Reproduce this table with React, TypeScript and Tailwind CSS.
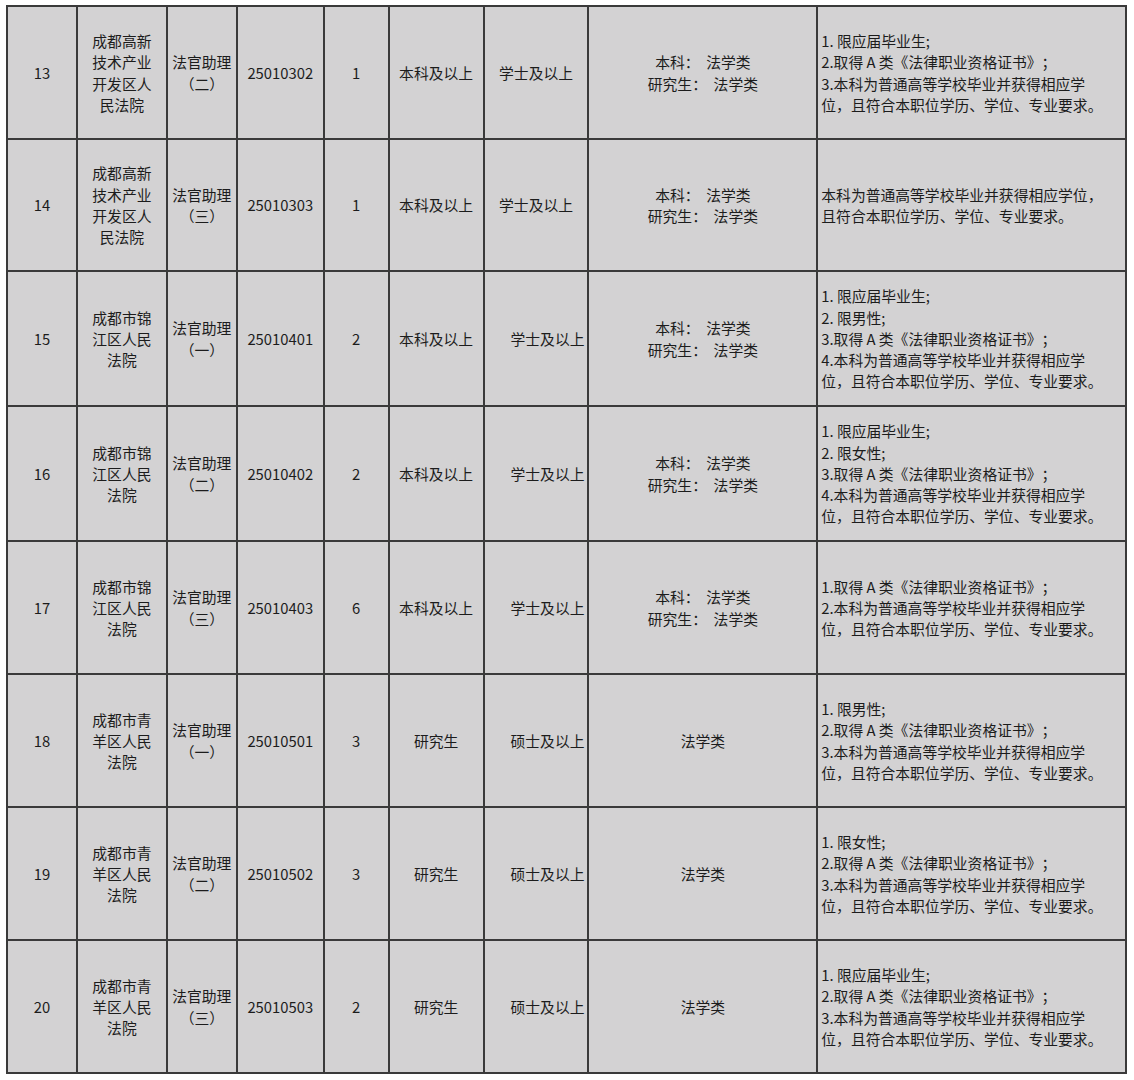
import React from "react";

type Row = {
  no: string;
  court: string[];
  post: string[];
  code: string;
  num: string;
  edu: string;
  degree: string;
  degreeRight: boolean;
  major: string[];
  notes: string[];
  h: number;
};

const N_BK = "本科为普通高等学校毕业并获得相应学";
const TAIL = "位，且符合本职位学历、学位、专业要求。";

const rows: Row[] = [
  {
    no: "13",
    court: ["成都高新", "技术产业", "开发区人", "民法院"],
    post: ["法官助理", "（二）"],
    code: "25010302",
    num: "1",
    edu: "本科及以上",
    degree: "学士及以上",
    degreeRight: false,
    major: ["本科：  法学类", "研究生：  法学类"],
    notes: ["1. 限应届毕业生;", "2.取得 A 类《法律职业资格证书》；", "3." + N_BK, TAIL],
    h: 133,
  },
  {
    no: "14",
    court: ["成都高新", "技术产业", "开发区人", "民法院"],
    post: ["法官助理", "（三）"],
    code: "25010303",
    num: "1",
    edu: "本科及以上",
    degree: "学士及以上",
    degreeRight: false,
    major: ["本科：  法学类", "研究生：  法学类"],
    notes: ["本科为普通高等学校毕业并获得相应学位，", "且符合本职位学历、学位、专业要求。"],
    h: 132,
  },
  {
    no: "15",
    court: ["成都市锦", "江区人民", "法院"],
    post: ["法官助理", "（一）"],
    code: "25010401",
    num: "2",
    edu: "本科及以上",
    degree: "学士及以上",
    degreeRight: true,
    major: ["本科：  法学类", "研究生：  法学类"],
    notes: ["1. 限应届毕业生;", "2. 限男性;", "3.取得 A 类《法律职业资格证书》；", "4." + N_BK, TAIL],
    h: 135,
  },
  {
    no: "16",
    court: ["成都市锦", "江区人民", "法院"],
    post: ["法官助理", "（二）"],
    code: "25010402",
    num: "2",
    edu: "本科及以上",
    degree: "学士及以上",
    degreeRight: true,
    major: ["本科：  法学类", "研究生：  法学类"],
    notes: ["1. 限应届毕业生;", "2. 限女性;", "3.取得 A 类《法律职业资格证书》；", "4." + N_BK, TAIL],
    h: 135,
  },
  {
    no: "17",
    court: ["成都市锦", "江区人民", "法院"],
    post: ["法官助理", "（三）"],
    code: "25010403",
    num: "6",
    edu: "本科及以上",
    degree: "学士及以上",
    degreeRight: true,
    major: ["本科：  法学类", "研究生：  法学类"],
    notes: ["1.取得 A 类《法律职业资格证书》；", "2." + N_BK, TAIL],
    h: 133,
  },
  {
    no: "18",
    court: ["成都市青", "羊区人民", "法院"],
    post: ["法官助理", "（一）"],
    code: "25010501",
    num: "3",
    edu: "研究生",
    degree: "硕士及以上",
    degreeRight: true,
    major: ["法学类"],
    notes: ["1. 限男性;", "2.取得 A 类《法律职业资格证书》；", "3." + N_BK, TAIL],
    h: 133,
  },
  {
    no: "19",
    court: ["成都市青", "羊区人民", "法院"],
    post: ["法官助理", "（二）"],
    code: "25010502",
    num: "3",
    edu: "研究生",
    degree: "硕士及以上",
    degreeRight: true,
    major: ["法学类"],
    notes: ["1. 限女性;", "2.取得 A 类《法律职业资格证书》；", "3." + N_BK, TAIL],
    h: 133,
  },
  {
    no: "20",
    court: ["成都市青", "羊区人民", "法院"],
    post: ["法官助理", "（三）"],
    code: "25010503",
    num: "2",
    edu: "研究生",
    degree: "硕士及以上",
    degreeRight: true,
    major: ["法学类"],
    notes: ["1. 限应届毕业生;", "2.取得 A 类《法律职业资格证书》；", "3." + N_BK, TAIL],
    h: 133,
  },
];

const cell = "flex flex-col justify-center border-r-2 border-[#3a3a3a] h-full";

function Lines({ lines }: { lines: string[] }) {
  return (
    <>
      {lines.map((l, i) => (
        <div key={i} className="whitespace-pre">
          {l}
        </div>
      ))}
    </>
  );
}

export default function App() {
  return (
    <div className="bg-white w-[1134px] h-[1080px] pt-[5px] pl-[6px]">
      <div
        className="w-[1121px] border-t-2 border-l-2 border-[#3a3a3a] bg-[#d3d2d3] text-[#1c1c1c] text-[14.8px] leading-[21.3px] [text-spacing-trim:space-all]"
        style={{ fontFamily: '"Noto Sans CJK SC", "Noto Sans", sans-serif' }}
      >
        {rows.map((r) => (
          <div
            key={r.no}
            className="flex border-b-2 border-[#3a3a3a]"
            style={{ height: r.h }}
          >
            <div className={`${cell} w-[70px] items-center text-center`}>{r.no}</div>
            <div className={`${cell} w-[90px] items-center text-center`}>
              <Lines lines={r.court} />
            </div>
            <div className={`${cell} w-[70px] items-center text-center`}>
              <Lines lines={r.post} />
            </div>
            <div className={`${cell} w-[87px] items-center text-center`}>{r.code}</div>
            <div className={`${cell} w-[65px] items-center text-center`}>{r.num}</div>
            <div className={`${cell} w-[95px] items-center text-center`}>{r.edu}</div>
            <div
              className={`${cell} w-[105px] ${
                r.degreeRight ? "items-end pr-[3px]" : "items-center"
              }`}
            >
              {r.degree}
            </div>
            <div className={`${cell} w-[229px] items-center text-center`}>
              <Lines lines={r.major} />
            </div>
            <div className={`${cell} w-[309px] items-start pl-[3px]`}>
              <Lines lines={r.notes} />
            </div>
          </div>
        ))}
      </div>
    </div>
  );
}
